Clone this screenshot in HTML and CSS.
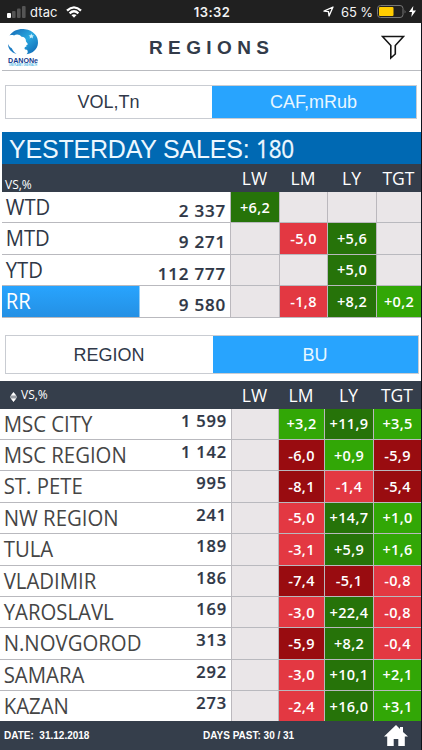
FILE: index.html
```html
<!DOCTYPE html>
<html lang="en">
<head>
<meta charset="utf-8">
<title>Regions</title>
<link rel="stylesheet" href="styles.css">
</head>
<body>
<div class="status">
  <div class="carrier">
    <svg width="19" height="13" viewBox="0 0 19 13"><rect x="0" y="8" width="4" height="5" rx="1" fill="#fff"/><rect x="5" y="6" width="3.6" height="7" rx="1" fill="#555"/><rect x="10" y="3.5" width="3.6" height="9.5" rx="1" fill="#555"/><rect x="15" y="1" width="3.6" height="12" rx="1" fill="#555"/></svg>
    <span class="net">dtac</span>
    <svg class="wifi" width="16" height="12" viewBox="0 0 16 12" fill="none" stroke="#fff" stroke-width="2.3"><path d="M1 4.6Q8-1.8 15 4.6"/><path d="M3.6 7.3Q8 3.3 12.4 7.3"/><path d="M5.4 9.1L8 11.8 10.6 9.1Q8 7.2 5.4 9.1Z" fill="#fff" stroke="none"/></svg>
  </div>
  <div class="clock">13:32</div>
  <div class="power">
    <svg width="11" height="11" viewBox="0 0 11 11" fill="none" stroke="#fff" stroke-width="1.3" stroke-linejoin="round"><path d="M1 5.2L10 1 6 10 5.5 5.6Z"/></svg>
    <span class="pct">65 %</span>
    <svg width="30" height="13" viewBox="0 0 30 13"><rect x=".5" y=".5" width="25.5" height="12" rx="3" fill="none" stroke="#777"/><rect x="2" y="2" width="14.5" height="9" rx="1" fill="#fc0"/><path d="M27.6 4.5Q29.3 6.500 27.6 8.5Z" fill="#777"/></svg>
    <svg width="7" height="11" viewBox="0 0 7 11"><path d="M4.3 0L0 6H3L2.3 11 7 4.5H3.8Z" fill="#fff"/></svg>
  </div>
</div>
<div class="app">
  <header class="top">
    <svg class="logo" width="34" height="42" viewBox="0 0 34 42">
      <defs><linearGradient id="g" x1="0" y1="0" x2="1" y2="1"><stop offset="0" stop-color="#1668b4"/><stop offset=".5" stop-color="#2aa8e0"/><stop offset="1" stop-color="#0d62b0"/></linearGradient></defs>
      <path d="M2.500 7.500C6 2.500 12 .4 18 1.200C26 2.200 31.500 8 31 15C30.600 21 26 25.500 19.500 26.300C21 25 21.200 23.500 20 21.800C17.500 22 17 20.500 18 19L19.500 18.500L19.300 17.200L21 16.200L19 13.500C19 10.500 17.500 8.800 14.500 8.700C12.500 6.200 9.500 5.800 7 7.500C5.500 6.800 4 7 2.500 7.500Z" fill="url(#g)"/>
      <path d="M1 16C1 20.500 4 24.500 9.500 26C6 23.500 5.500 21 4.500 20C3 19.500 2 18 1 16Z" fill="#1b7cc4"/>
      <path d="M24.300 5.500l.8 1.700 1.900.2-1.400 1.300.4 1.900-1.700-1-1.700 1 .4-1.900-1.400-1.300 1.900-.2z" fill="#c9effc"/>
      <text class="brand" x="1" y="34.500" textLength="30" lengthAdjust="spacingAndGlyphs">DANONe</text>
      <text class="motto" x="2" y="37.600" textLength="28" lengthAdjust="spacingAndGlyphs">ONE PLANET. ONE HEALTH</text>
    </svg>
    <h1>REGIONS</h1>
    <svg class="filter" width="24" height="25" viewBox="0 0 24 25" fill="none" stroke="#151515" stroke-width="1.600"><path d="M1.500 1.500H22.500L14.300 10.500V19L9.800 23V10.500Z"/></svg>
  </header>
  <div class="toggle units"><div class="opt"><span>VOL,Tn</span></div><div class="opt on"><span>CAF,mRub</span></div></div>
  <section class="summary">
    <div class="title">YESTERDAY SALES: <span class="total">180</span></div>
    <div class="row head"><div class="vs"><span>VS,%</span></div><div>LW</div><div>LM</div><div>LY</div><div>TGT</div></div>
    <div class="row"><div class="name"><span>WTD</span><b>2 337</b></div><div class="dg">+6,2</div><div></div><div></div><div></div></div>
    <div class="row"><div class="name"><span>MTD</span><b>9 271</b></div><div></div><div class="r">-5,0</div><div class="dg">+5,6</div><div></div></div>
    <div class="row"><div class="name"><span>YTD</span><b>112 777</b></div><div></div><div></div><div class="dg">+5,0</div><div></div></div>
    <div class="row"><div class="name active"><span>RR</span><b>9 580</b></div><div></div><div class="r">-1,8</div><div class="dg">+8,2</div><div class="g">+0,2</div></div>
  </section>
  <div class="toggle level"><div class="opt"><span>REGION</span></div><div class="opt on"><span>BU</span></div></div>
  <section class="regions">
    <div class="row head"><div class="vs"><svg width="7" height="10" viewBox="0 0 7 10" fill="#fff"><path d="M3.500 0L6.500 3.800H.5ZM0 4.500H7V5.500H0ZM.5 6.200H6.500L3.500 10Z"/></svg><span>VS,%</span></div><div>LW</div><div>LM</div><div>LY</div><div>TGT</div></div>
    <div class="row"><div class="name"><span>MSC CITY</span><b>1 599</b></div><div></div><div class="g">+3,2</div><div class="dg">+11,9</div><div class="g">+3,5</div></div>
    <div class="row"><div class="name"><span>MSC REGION</span><b>1 142</b></div><div></div><div class="dr">-6,0</div><div class="g">+0,9</div><div class="dr">-5,9</div></div>
    <div class="row"><div class="name"><span>ST. PETE</span><b>995</b></div><div></div><div class="dr">-8,1</div><div class="r">-1,4</div><div class="dr">-5,4</div></div>
    <div class="row"><div class="name"><span>NW REGION</span><b>241</b></div><div></div><div class="r">-5,0</div><div class="dg">+14,7</div><div class="g">+1,0</div></div>
    <div class="row"><div class="name"><span>TULA</span><b>189</b></div><div></div><div class="r">-3,1</div><div class="dg">+5,9</div><div class="g">+1,6</div></div>
    <div class="row"><div class="name"><span>VLADIMIR</span><b>186</b></div><div></div><div class="dr">-7,4</div><div class="dr">-5,1</div><div class="r">-0,8</div></div>
    <div class="row"><div class="name"><span>YAROSLAVL</span><b>169</b></div><div></div><div class="r">-3,0</div><div class="dg">+22,4</div><div class="r">-0,8</div></div>
    <div class="row"><div class="name"><span>N.NOVGOROD</span><b>313</b></div><div></div><div class="dr">-5,9</div><div class="dg">+8,2</div><div class="r">-0,4</div></div>
    <div class="row"><div class="name"><span>SAMARA</span><b>292</b></div><div></div><div class="r">-3,0</div><div class="dg">+10,1</div><div class="g">+2,1</div></div>
    <div class="row"><div class="name"><span>KAZAN</span><b>273</b></div><div></div><div class="r">-2,4</div><div class="dg">+16,0</div><div class="g">+3,1</div></div>
  </section>
  <footer>
    <span class="date">DATE:&nbsp; 31.12.2018</span>
    <span class="days">DAYS PAST: 30 / 31</span>
    <svg width="24" height="21" viewBox="0 0 24 21"><path d="M12 0L16 4V2H19V7L24 11.500H20.800V21H14.300V14H9.700V21H3.200V11.500H0Z" fill="#fff"/></svg>
  </footer>
</div>
</body>
</html>
```

FILE: styles.css
```css
* { box-sizing: border-box; }
body { margin: 0; width: 422px; height: 750px; overflow: hidden; background: #fff; color: #2f3746; font-family: "Open Sans", "Noto Sans", sans-serif; }
svg { display: block; flex: none; }

.status { height: 23px; background: #202020; color: #f4f4f4; display: grid; grid-template-columns: 150px 124px 148px; align-items: center; font: 13px/22px Inter, sans-serif; }
.carrier { display: flex; align-items: center; padding-left: 7px; }
.net { margin-left: 4px; letter-spacing: .1px; }
.wifi { margin-left: 8px; }
.clock { text-align: center; font-weight: 600; letter-spacing: .4px; }
.power { display: flex; align-items: center; padding-left: 49px; }
.pct { width: 36px; margin-left: 7px; white-space: nowrap; letter-spacing: -.1px; }
.power svg:last-child { margin-left: 2px; }

.app { height: 727px; border-right: 1px solid #10131c; }
.top { height: 48px; margin-left: 2px; border-bottom: 1px solid #b9bbc0; display: flex; align-items: flex-start; }
.logo { margin: 5px 0 0 5px; overflow: visible; }
.brand { font: bold 7px "Liberation Sans", sans-serif; fill: #143a8c; }
.motto { font: bold 2.600px "Liberation Sans", sans-serif; fill: #45b3e3; }
h1 { margin: 13px 0 0 108px; width: 232px; font: bold 19px/24px "Liberation Sans", sans-serif; letter-spacing: 5.400px; color: #323b49; }
.filter { margin-top: 12px; }

.toggle { display: grid; border: 1px solid #c9ccd2; font-family: "Liberation Sans", sans-serif; font-size: 18px; }
.opt { display: flex; align-items: center; justify-content: center; color: #303849; }
.on { background: #28a4fe; color: #e9f7ff; }
.opt span { margin-right: 1px; }
.units { margin: 14px 4px 0 5px; height: 34px; grid-template-columns: 206px 1fr; }
.units .opt span { padding-top: 1px; }
.level { margin: 17px 2px 0 5px; height: 39px; grid-template-columns: 207px 1fr; }
.level .opt span { padding-top: 2px; }

.summary { margin: 13px 0 0 2px; }
.title { height: 32px; padding-left: 7px; background: #0069b3; color: #edf8ff; font: 25px/33px "Liberation Sans", sans-serif; letter-spacing: -.2px; white-space: nowrap; }
.total { display: inline-block; font-family: "Open Sans", sans-serif; font-size: 25px; line-height: 32px; transform: scaleX(.9); transform-origin: left; -webkit-text-stroke: .3px; }
.row { display: grid; height: 31.400px; }
.row > div { display: flex; align-items: center; justify-content: center; background: #eae6e8; border-left: 1px solid #bbb8bd; border-bottom: 1px solid #b9b9be; color: #fff; font-size: 14.500px; font-weight: 600; letter-spacing: .35px; overflow: hidden; white-space: nowrap; }
.summary .row { grid-template-columns: 228px 49px 48px 49px 1fr; }
.regions .row { grid-template-columns: 231px 47px 46px 49px 1fr; }
.row > .dg { background: #267309; }
.row > .g { background: #32a706; }
.row > .r { background: #e33842; }
.row > .dr { background: #990c10; }
.row > .name { justify-content: space-between; align-items: flex-start; background: #fff; border-left: 0; color: #2f3746; letter-spacing: 0; }
.name span { font-weight: 400; font-size: 21.500px; line-height: 30px; transform-origin: left; transform: scaleX(.94); padding-left: 4px; }
.name b { font-weight: 600; font-size: 17px; letter-spacing: .8px; line-height: 24px; -webkit-text-stroke: .2px; }
.summary .name b { padding: 7px 4px 0 0; }
.row > .active { background: linear-gradient(to right, transparent 137px, #fff 138px), linear-gradient(#28a4fe, #2490e4); }
.row > .active span { color: #fff; }
.row.head > div { background: #353e4b; border: 0; font-size: 17.500px; font-weight: 400; letter-spacing: 0; }
.summary .head { height: 28px; }
.row.head > .vs { justify-content: flex-start; font-size: 12px; letter-spacing: 0; }
.summary .vs { padding: 12px 0 0 3px; }

.regions { margin-top: 7px; height: 340px; overflow: hidden; }
.regions .head { height: 28px; }
.regions .vs { padding-left: 10px; gap: 4px; }
.regions .vs svg { margin-top: 4px; }
.regions .name span { font-size: 22px; line-height: 29px; color: #454545; transform: scaleX(.925); }
.regions .name b { font-size: 16.500px; padding-right: 4px; }

footer { height: 30px; background: #353e4b; color: #fff; display: flex; align-items: center; padding-left: 4px; font: bold 10px "Liberation Sans", sans-serif; white-space: nowrap; }
.date { width: 199px; }
.days { width: 181px; }
```
